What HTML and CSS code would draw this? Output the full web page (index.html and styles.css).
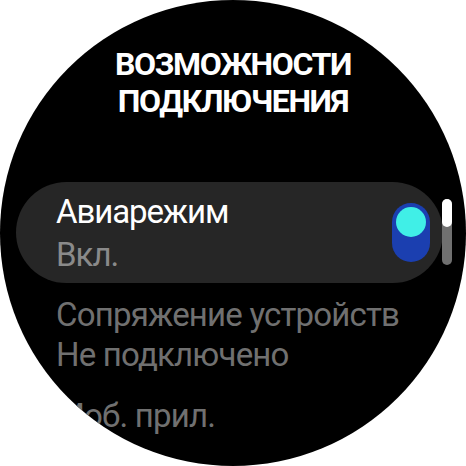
FILE: index.html
```html
<!DOCTYPE html>
<html>
<head>
<meta charset="utf-8">
<link rel="stylesheet" href="styles.css">
</head>
<body>
<div class="watch">
  <h1 class="title">ВОЗМОЖНОСТИ<br>ПОДКЛЮЧЕНИЯ</h1>
  <div class="card">
    <div class="card-text">
      <div class="primary">Авиарежим</div>
      <div class="secondary">Вкл.</div>
    </div>
    <div class="toggle"><div class="knob"></div></div>
  </div>
  <div class="item first">
    <div class="item-title">Сопряжение устройств</div>
    <div class="item-sub">Не подключено</div>
  </div>
  <div class="item next">
    <div class="item-title">Моб. прил.</div>
  </div>
  <div class="scrollbar"><div class="thumb"></div></div>
</div>
</body>
</html>
```
FILE: styles.css
```css
html, body {
  margin: 0;
  padding: 0;
  background: #ffffff;
}
.watch {
  position: relative;
  width: 466px;
  height: 466px;
  border-radius: 50%;
  background: #000000;
  overflow: hidden;
  font-family: Roboto, "Noto Sans", sans-serif;
  display: flex;
  flex-direction: column;
}
.title {
  margin: 0;
  padding-top: 46px;
  text-align: center;
  color: #ffffff;
  font-weight: 700;
  font-size: 32px;
  line-height: 37px;
  letter-spacing: -1.4px;
}
.card {
  margin: 62px 23px 0 16px;
  height: 101px;
  box-sizing: border-box;
  border-radius: 51px;
  background: #262626;
  display: flex;
  align-items: center;
  padding: 0 13px 0 40px;
}
.card-text {
  flex: 1;
  align-self: flex-start;
  padding-top: 9px;
}
.primary {
  color: #ffffff;
  font-size: 33px;
  line-height: 42px;
  letter-spacing: -1.1px;
}
.secondary {
  margin-top: 1px;
  color: #8a8a8a;
  font-size: 33px;
  line-height: 42px;
  letter-spacing: -1px;
}
.toggle {
  width: 38px;
  height: 59px;
  border-radius: 19px;
  background: #1b3fb0;
  display: flex;
  justify-content: center;
  padding-top: 4px;
  box-sizing: border-box;
}
.knob {
  width: 30px;
  height: 30px;
  border-radius: 50%;
  background: #40efe7;
}
.item {
  padding-left: 56px;
}
.item.first {
  margin-top: 12px;
}
.item.next {
  margin-top: 21px;
}
.item-title, .item-sub {
  color: #707070;
  font-size: 33px;
  line-height: 40px;
  letter-spacing: -0.8px;
}
.scrollbar {
  position: absolute;
  left: 442px;
  top: 199px;
  width: 10px;
  height: 66px;
  border-radius: 5px;
  background: #707070;
}
.thumb {
  height: 28px;
  border-radius: 5px;
  background: #ffffff;
}
```
